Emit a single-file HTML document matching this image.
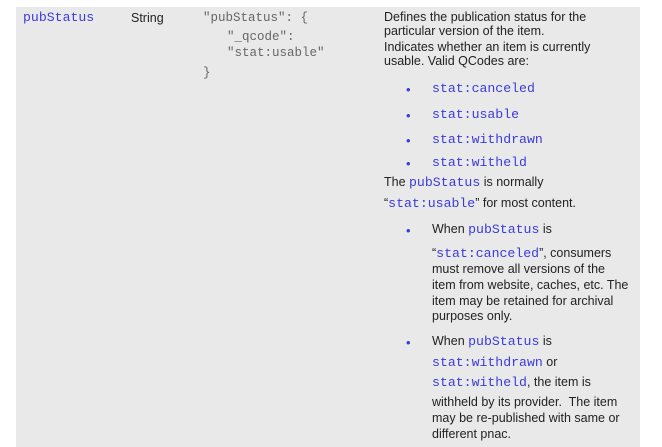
<!DOCTYPE html>
<html><head><style>
body{margin:0;width:662px;height:447px;background:#fff;position:relative;overflow:hidden;font-family:"Liberation Sans",sans-serif;font-size:12.5px;color:#222}
.box{position:absolute;left:16px;top:7px;width:624px;height:440px;background:#e9e9e9}
.l{position:absolute;white-space:nowrap;line-height:14px}
.m{font-family:"Liberation Mono",monospace;font-size:13.2px}
.c{font-family:"Liberation Mono",monospace;font-size:12.5px}
.b{color:#3b3bdc}
.g{color:#666}
.dot{position:absolute;color:#3b3bdc;font-size:13px}
</style></head><body>
<div class="box"></div>
<div class="l m b" style="left:23px;top:11px">pubStatus</div>
<div class="l" style="left:131px;top:11px">String</div>
<div class="l c g" style="left:203px;top:11px">"pubStatus": {</div>
<div class="l c g" style="left:227px;top:30px">"_qcode":</div>
<div class="l c g" style="left:227px;top:46px">"stat:usable"</div>
<div class="l c g" style="left:203px;top:66px">}</div>

<div class="l" style="left:384px;top:10px">Defines the publication status for the</div>
<div class="l" style="left:384px;top:24px">particular version of the item.</div>
<div class="l" style="left:384px;top:40px">Indicates whether an item is currently</div>
<div class="l" style="left:384px;top:54px">usable. Valid QCodes are:</div>

<div class="dot" style="left:406px;top:82px">•</div><div class="l m b" style="left:432px;top:82px">stat:canceled</div>
<div class="dot" style="left:406px;top:108px">•</div><div class="l m b" style="left:432px;top:108px">stat:usable</div>
<div class="dot" style="left:406px;top:133px">•</div><div class="l m b" style="left:432px;top:133px">stat:withdrawn</div>
<div class="dot" style="left:406px;top:156px">•</div><div class="l m b" style="left:432px;top:156px">stat:witheld</div>

<div class="l" style="left:384px;top:175px">The <span class="m b">pubStatus</span> is normally</div>
<div class="l" style="left:384px;top:196px">“<span class="m b">stat:usable</span>” for most content.</div>

<div class="dot" style="left:406px;top:223px">•</div>
<div class="l" style="left:432px;top:222px">When <span class="m b">pubStatus</span> is</div>
<div class="l" style="left:432px;top:246px">“<span class="m b">stat:canceled</span>”, consumers</div>
<div class="l" style="left:432px;top:262px">must remove all versions of the</div>
<div class="l" style="left:432px;top:278px">item from website, caches, etc. The</div>
<div class="l" style="left:432px;top:294px">item may be retained for archival</div>
<div class="l" style="left:432px;top:309px">purposes only.</div>

<div class="dot" style="left:406px;top:335px">•</div>
<div class="l" style="left:432px;top:334px">When <span class="m b">pubStatus</span> is</div>
<div class="l" style="left:432px;top:355px"><span class="m b">stat:withdrawn</span>  or</div>
<div class="l" style="left:432px;top:375px"><span class="m b">stat:witheld</span>, the item is</div>
<div class="l" style="left:432px;top:395px">withheld by its provider.&nbsp; The item</div>
<div class="l" style="left:432px;top:411px">may be re-published with same or</div>
<div class="l" style="left:432px;top:427px">different pnac.</div>
</body></html>
